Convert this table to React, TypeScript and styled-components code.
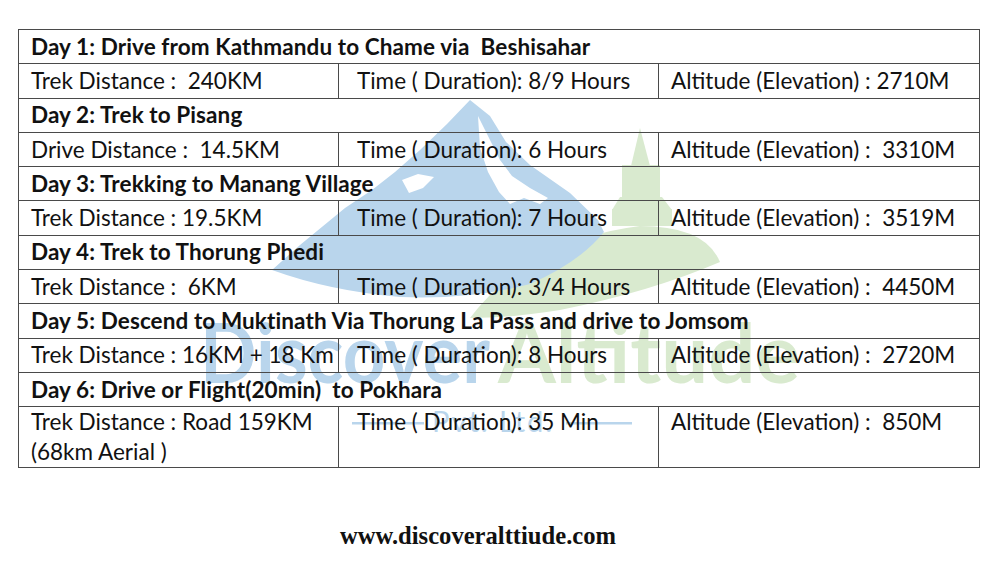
import styled, { createGlobalStyle } from 'styled-components';

const GlobalStyle = createGlobalStyle`
  html, body {
    margin: 0;
    padding: 0;
    background: #ffffff;
  }
  body {
    font-family: Lato, "Open Sans", "DejaVu Sans", sans-serif;
    color: #111111;
  }
`;

const Page = styled.div`
  position: relative;
  width: 1000px;
  height: 572px;
  padding: 29px 0 0 18px;
  box-sizing: border-box;
  overflow: hidden;
`;

const Watermark = styled.svg`
  position: absolute;
  left: 0;
  top: 0;
  width: 1000px;
  height: 572px;
  z-index: 0;
  pointer-events: none;
`;

const Table = styled.table`
  position: relative;
  z-index: 1;
  width: 961px;
  table-layout: fixed;
  border-collapse: collapse;
  font-family: Lato, "Open Sans", sans-serif;
  font-size: 22.5px;
  color: #111111;
`;

const Row = styled.tr<{ $tall?: boolean }>`
  height: ${(p) => (p.$tall ? '60px' : '34.3px')};
`;

const Cell = styled.td<{ $indent?: number; $top?: boolean }>`
  border: 1px solid #4a4a4a;
  padding: 0 4px 0 ${(p) => p.$indent ?? 12}px;
  white-space: pre-wrap;
  vertical-align: ${(p) => (p.$top ? 'top' : 'middle')};
  line-height: ${(p) => (p.$top ? '30px' : '24px')};
  background: transparent;
`;

const DayCell = styled(Cell)`
  font-weight: 700;
  letter-spacing: 0.1px;
`;

const Footer = styled.div`
  position: relative;
  z-index: 1;
  margin-top: 54px;
  width: 920px;
  text-align: center;
  font-family: "Liberation Serif", "Times New Roman", serif;
  font-weight: 700;
  font-size: 24.6px;
  color: #111111;
`;

type Day = {
  title: string;
  distance: string;
  time: string;
  altitude: string;
  tall?: boolean;
};

const days: Day[] = [
  {
    title: 'Day 1: Drive from Kathmandu to Chame via  Beshisahar',
    distance: 'Trek Distance :  240KM',
    time: 'Time ( Duration): 8/9 Hours',
    altitude: 'Altitude (Elevation) : 2710M',
  },
  {
    title: 'Day 2: Trek to Pisang',
    distance: 'Drive Distance :  14.5KM',
    time: 'Time ( Duration): 6 Hours',
    altitude: 'Altitude (Elevation) :  3310M',
  },
  {
    title: 'Day 3: Trekking to Manang Village',
    distance: 'Trek Distance : 19.5KM',
    time: 'Time ( Duration): 7 Hours',
    altitude: 'Altitude (Elevation) :  3519M',
  },
  {
    title: 'Day 4: Trek to Thorung Phedi',
    distance: 'Trek Distance :  6KM',
    time: 'Time ( Duration): 3/4 Hours',
    altitude: 'Altitude (Elevation) :  4450M',
  },
  {
    title: 'Day 5: Descend to Muktinath Via Thorung La Pass and drive to Jomsom',
    distance: 'Trek Distance : 16KM + 18 Km',
    time: 'Time ( Duration): 8 Hours',
    altitude: 'Altitude (Elevation) :  2720M',
  },
  {
    title: 'Day 6: Drive or Flight(20min)  to Pokhara',
    distance: 'Trek Distance : Road 159KM\n(68km Aerial )',
    time: 'Time ( Duration): 35 Min',
    altitude: 'Altitude (Elevation) :  850M',
    tall: true,
  },
];

const BLUE = '#b9d5ec';
const GREEN = '#d9eacf';

const Logo = () => (
  <Watermark viewBox="0 0 1000 572">
    {/* stupa */}
    <g fill={GREEN}>
      <path d="M640 128 L631 166 L650 166 Z" />
      <rect x="622" y="165" width="38" height="33" />
      <path d="M620 197 L662 197 L672 210 L612 210 Z" />
      <rect x="612" y="209" width="60" height="17" />
      <path d="M470 318 Q530 240 640 226 Q705 226 720 262 Q650 292 560 310 Q510 318 470 318 Z" />
    </g>
    {/* mountain */}
    <path
      fill={BLUE}
      d="M272 270 L300 245 L345 208 L372 190 L395 172 L420 150 L447 124 L470 100 L490 116 L506 142 L530 165 L570 193 L598 220 L604 232 Q580 262 530 284 Q470 300 400 297 Q330 291 272 270 Z"
    />
    <g fill="#ffffff">
      <path d="M478 116 L489 138 L500 160 L512 176 L530 188 L548 198 L540 204 L524 198 L510 204 L499 192 L488 172 L480 148 Z" />
      <path d="M402 180 L418 174 L434 177 L423 188 L409 193 Z" />
    </g>
    <text
      x="200"
      y="383"
      fill={BLUE}
      fontFamily="Lato, sans-serif"
      fontWeight="700"
      fontSize="82"
      textLength="290"
      lengthAdjust="spacingAndGlyphs"
    >
      Discover
    </text>
    <text
      x="498"
      y="383"
      fill={GREEN}
      fontFamily="Lato, sans-serif"
      fontWeight="700"
      fontSize="82"
      textLength="302"
      lengthAdjust="spacingAndGlyphs"
    >
      Altitude
    </text>
    <text
      x="432"
      y="432"
      fill={BLUE}
      fontFamily="Lato, sans-serif"
      fontSize="29"
      letterSpacing="2"
    >
      Pvt. Ltd.
    </text>
    <rect x="352" y="422" width="72" height="2.5" fill={BLUE} />
    <rect x="566" y="422" width="66" height="2.5" fill={BLUE} />
  </Watermark>
);

const App = () => {
  return (
    <Page>
      <GlobalStyle />
      <Logo />
      <Table>
        <colgroup>
          <col style={{ width: '320px' }} />
          <col style={{ width: '320px' }} />
          <col style={{ width: '321px' }} />
        </colgroup>
        <tbody>
          {days.flatMap((d) => [
            <Row key={d.title}>
              <DayCell colSpan={3}>{d.title}</DayCell>
            </Row>,
            <Row key={d.title + '-info'} $tall={d.tall}>
              <Cell $top={d.tall}>{d.distance}</Cell>
              <Cell $top={d.tall} $indent={18}>
                {d.time}
              </Cell>
              <Cell $top={d.tall}>{d.altitude}</Cell>
            </Row>,
          ])}
        </tbody>
      </Table>
      <Footer>www.discoveralttiude.com</Footer>
    </Page>
  );
};

export default App;
